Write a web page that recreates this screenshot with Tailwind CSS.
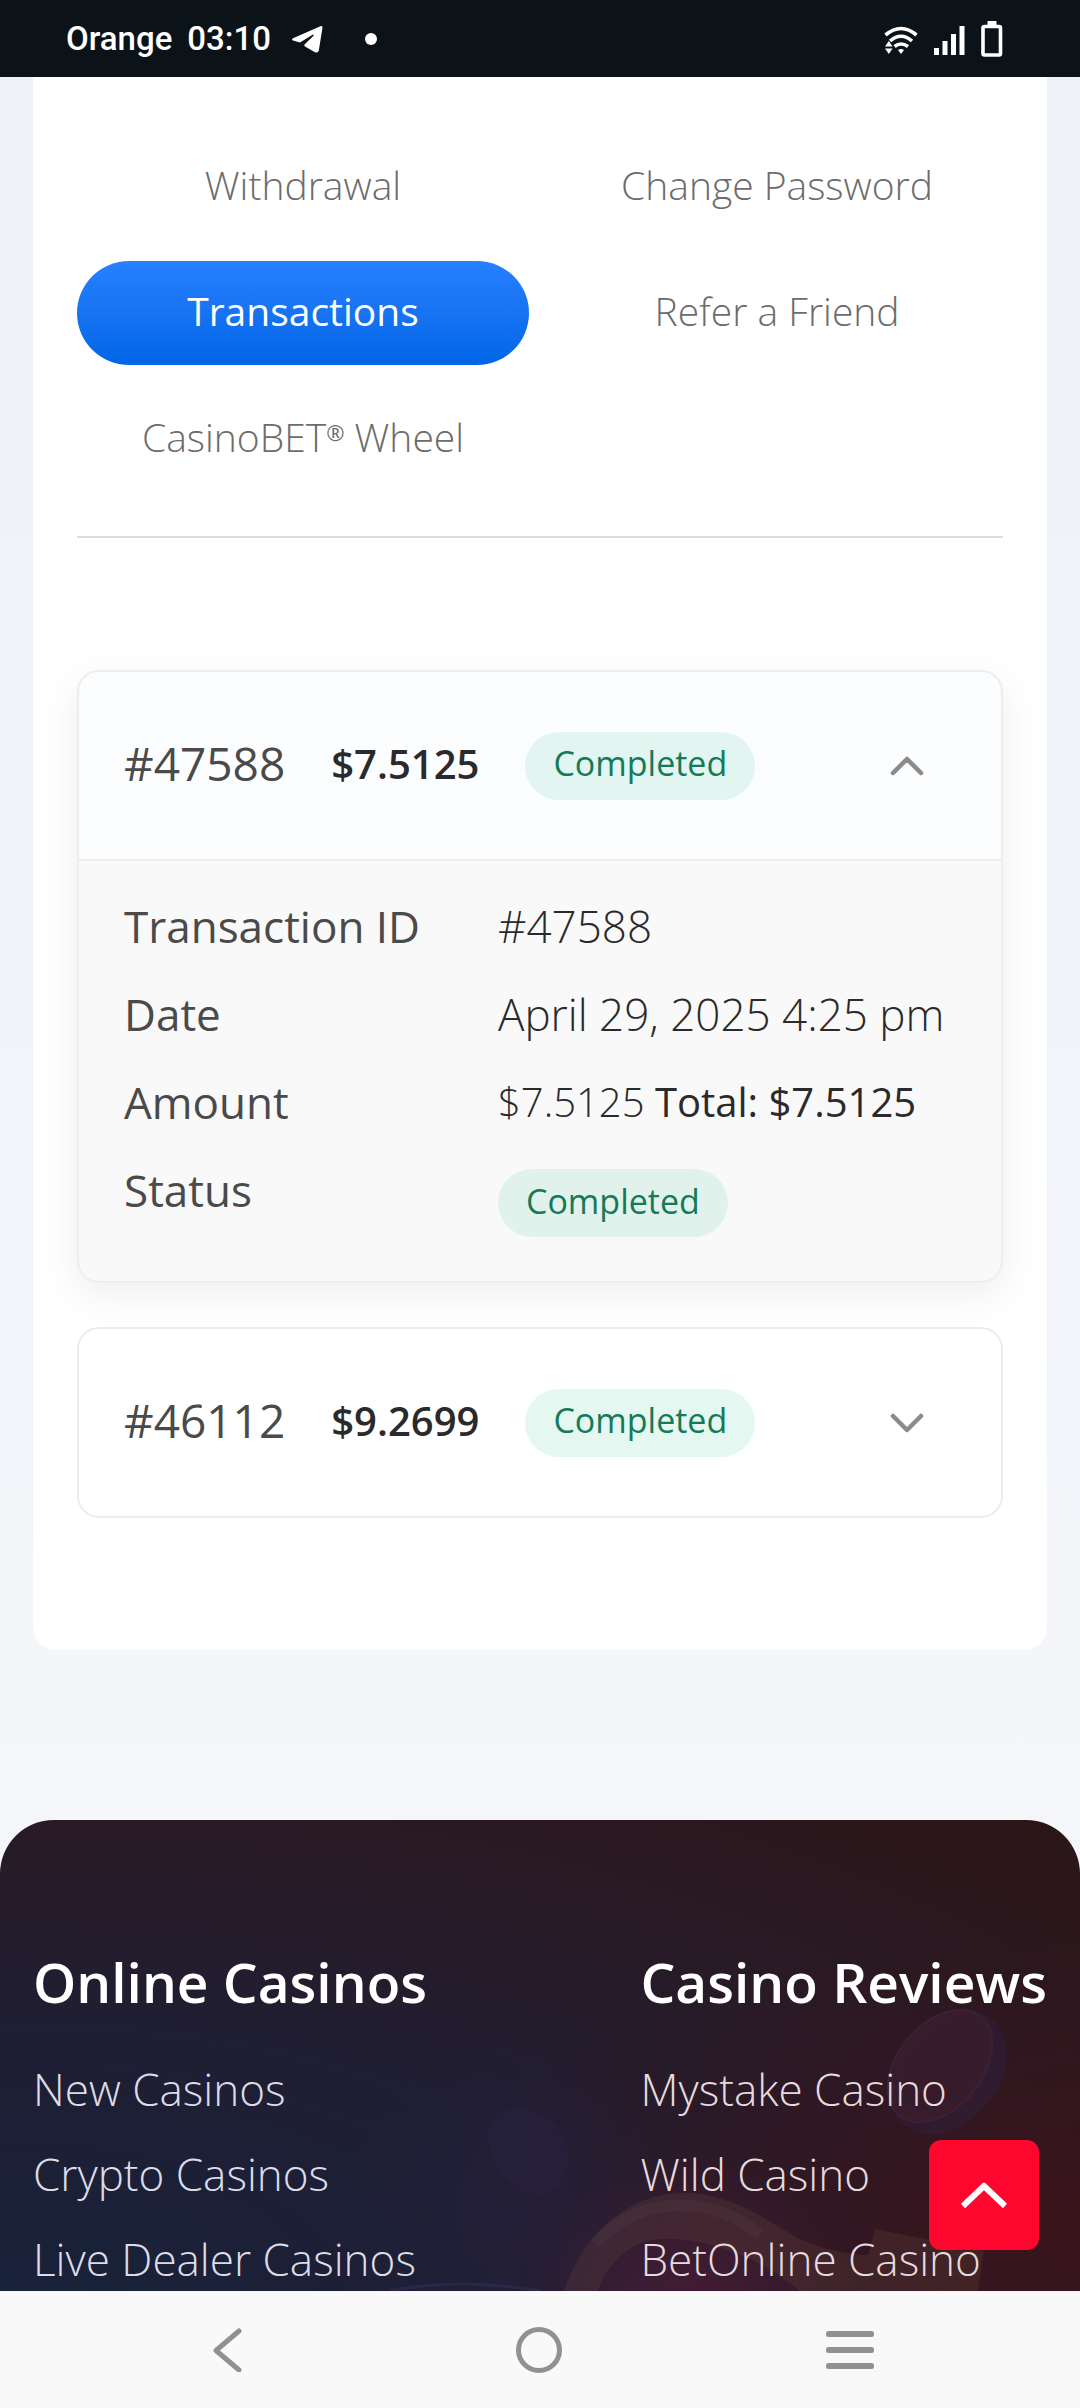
<!DOCTYPE html>
<html lang="en">
<head>
  <meta charset="UTF-8" />
  <meta name="viewport" content="width=device-width, initial-scale=1.0"/>
  <title>Transactions - CasinoBET</title>
  <script src="https://cdn.jsdelivr.net/npm/@tailwindcss/browser@4"></script>
</head>
<body class="min-h-screen flex flex-col bg-[#f1f4f9] font-['Open_Sans',sans-serif] text-[#2a2a2c]">

  <!-- Status bar -->
  <header class="flex items-center h-[77px] px-[66px] bg-[#0c1318] text-white">
    <div class="flex items-center gap-[15px] font-['Roboto',sans-serif] font-medium text-[33px] leading-10">
      <span>Orange</span>
      <span>03:10</span>
    </div>
    <svg class="ml-5 w-8 h-7" viewBox="0 0 32 28" fill="currentColor">
      <path d="M30 1 2 13.200Q0 14.500 2 15.500L9 17.500 22 9.500Q23.500 9.500 22.500 10.800L13.500 19.500Q13 20.500 14 21.500L24 27.200Q27 28.500 27.800 25.500L31.500 2.500Q31.500 .5 30 1Z"/>
    </svg>
    <span class="ml-[42px] size-3 rounded-full bg-white"></span>
    <div class="ml-auto flex items-center gap-4 pr-[11px]">
      <svg class="w-[34px] h-9" viewBox="0 0 34 36">
        <g fill="none" stroke="#fff" stroke-width="3.600">
          <path d="M1.500 14Q17 1 32.500 14"/>
          <path d="M6 20Q17 10.500 28 20"/>
          <path d="M10.500 25.500Q17 20.500 24 25.500"/>
        </g>
        <path fill="#fff" d="M1 25.500 4.800 20 8.600 25.500ZM1 27.500H8.600L4.800 33ZM14 29Q17 27 20 29L17 33Z"/>
      </svg>
      <svg class="w-[31px] h-9" viewBox="0 0 31 36" fill="#fff">
        <path d="M0 27h5v7H0zM8.500 20h5v14h-5zM17 13h5v21h-5zM25.500 5h5v29h-5z"/>
      </svg>
      <svg class="w-[22px] h-9" viewBox="0 0 22 36">
        <path fill="#fff" d="M6.500 0h9v5h-9z"/>
        <rect x="2" y="5.500" width="17.500" height="28.500" rx="1.500" fill="none" stroke="#fff" stroke-width="3.600"/>
      </svg>
    </div>
  </header>

  <main class="px-[33px] pb-[170px] bg-linear-to-b from-[#eef2f8] to-[#f4f6fa]">
    <div class="px-11 pt-[58px] pb-[132px] bg-white rounded-b-[22px]">

      <!-- Account menu -->
      <nav class="grid grid-cols-2 gap-x-[22px] gap-y-[22px] pb-[45px] border-b-2 border-[#dcdcdd] font-light text-[39px] text-[#6c6c6c] text-center">
        <a href="#" class="flex items-center justify-center h-[104px] pb-1 rounded-full">Withdrawal</a>
        <a href="#" class="flex items-center justify-center h-[104px] pb-1 rounded-full">Change Password</a>
        <a href="#" class="flex items-center justify-center h-[104px] pb-1 rounded-full bg-linear-to-b from-[#2680ff] to-[#0066e6] font-medium text-white">Transactions</a>
        <a href="#" class="flex items-center justify-center h-[104px] pb-1 rounded-full">Refer a Friend</a>
        <a href="#" class="flex items-center justify-center h-[104px] pb-1 rounded-full"><span>CasinoBET<sup class="text-[22px] font-normal">®</sup> Wheel</span></a>
      </nav>

      <!-- Transactions -->
      <section class="mt-[132px] flex flex-col gap-11">
        <article class="border-2 border-[#ededee] rounded-[22px] overflow-hidden bg-[#f9f9f9] shadow-[0_11px_40px_rgba(0,0,0,0.07)]">
          <button type="button" aria-expanded="true" class="flex items-center w-full h-[189px] pl-[45px] pr-[77px] gap-[46px] border-b-2 border-[#ededee] bg-[#fcfdff] text-left">
            <span class="pb-1 text-[46px] text-[#4a4a4a]">#47588</span>
            <span class="pb-1 text-[40px] font-semibold">$7.5125</span>
            <span class="h-[68px] px-7 pb-1 flex items-center rounded-full bg-[#e2f5f0] font-medium text-[34px] text-[#147a58]">Completed</span>
            <svg class="ml-auto w-[34px] h-5" viewBox="0 0 34 20" fill="none" stroke="#8b8b8c" stroke-width="4.500" stroke-linecap="round" stroke-linejoin="round"><path d="M3 17 17 3 31 17"/></svg>
          </button>
          <dl class="grid grid-cols-[374px_1fr] gap-y-[22px] pl-[45px] pt-8 pb-11 text-[44px] leading-[66px] whitespace-nowrap">
            <dt class="font-medium text-[#4a4a4a]">Transaction ID</dt>
            <dd class="font-light">#47588</dd>
            <dt class="font-medium text-[#4a4a4a]">Date</dt>
            <dd class="font-light">April 29, 2025 4:25 pm</dd>
            <dt class="font-medium text-[#4a4a4a]">Amount</dt>
            <dd class="font-light text-[40px]">$7.5125 <strong class="font-medium">Total: $7.5125</strong></dd>
            <dt class="font-medium text-[#4a4a4a]">Status</dt>
            <dd class="flex pt-3"><span class="h-[68px] px-7 pb-1 flex items-center rounded-full bg-[#e1f2ec] font-medium text-[34px] text-[#147a58]">Completed</span></dd>
          </dl>
        </article>

        <article class="border-2 border-[#ededee] rounded-[22px] overflow-hidden bg-white">
          <button type="button" aria-expanded="false" class="flex items-center w-full h-[187px] pl-[45px] pr-[77px] gap-[46px] text-left">
            <span class="pb-1 text-[46px] text-[#4a4a4a]">#46112</span>
            <span class="pb-1 text-[40px] font-semibold">$9.2699</span>
            <span class="h-[68px] px-7 pb-1 flex items-center rounded-full bg-[#e5f7f1] font-medium text-[34px] text-[#147a58]">Completed</span>
            <svg class="ml-auto w-[34px] h-5" viewBox="0 0 34 20" fill="none" stroke="#8b8b8c" stroke-width="4.500" stroke-linecap="round" stroke-linejoin="round"><path d="M3 3 17 17 31 3"/></svg>
          </button>
        </article>
      </section>
    </div>
  </main>

  <div class="flex-1 bg-[#f4f6fa]">
    <footer class="relative h-full overflow-hidden rounded-t-[54px] px-[33px] pt-[130px] pb-[7px] bg-[radial-gradient(ellipse_at_0%_100%,#18223a_0%,#1f1e33_40%,#291a25_70%,#2b1516_100%)]">
      <!-- Artwork -->
      <svg class="absolute inset-0 w-full h-full" viewBox="0 0 1080 472" preserveAspectRatio="xMidYMax slice">
        <defs>
          <radialGradient id="glow" cx="1" cy=".85" r=".6">
            <stop offset="0" stop-color="#3e1218" stop-opacity=".8"/>
            <stop offset="1" stop-color="#3e1218" stop-opacity="0"/>
          </radialGradient>
          <radialGradient id="haze" cx="690" cy="500" r="170" gradientUnits="userSpaceOnUse">
            <stop offset="0" stop-color="#521e3c" stop-opacity=".7"/>
            <stop offset="1" stop-color="#521e3c" stop-opacity="0"/>
          </radialGradient>
          <radialGradient id="violet" cx="515" cy="390" r="170" gradientUnits="userSpaceOnUse">
            <stop offset="0" stop-color="#27213f" stop-opacity=".5"/>
            <stop offset="1" stop-color="#27213f" stop-opacity="0"/>
          </radialGradient>
        </defs>
        <rect width="1080" height="472" fill="url(#glow)"/>
        <rect width="1080" height="472" fill="url(#violet)"/>
        <rect width="1080" height="472" fill="url(#haze)"/>
        <path d="M492 300C505 285 530 287 548 300 566 313 573 335 566 355 558 375 540 382 520 370 496 355 480 320 492 300Z" fill="#2b2444" opacity=".4"/>
        <path d="M902 227C920 202 950 187 975 192 1000 198 1012 222 1005 252 996 285 960 317 932 316 905 313 888 295 887 272 886 255 892 240 902 227Z" fill="#301d33" opacity=".8"/>
        <ellipse cx="940" cy="247" rx="64" ry="42" transform="rotate(-50 940 247)" fill="#381c2b" stroke="#3c2135" stroke-width="2"/>
        <ellipse cx="943" cy="247" rx="52" ry="31" transform="rotate(-50 943 247)" fill="#371b2a" stroke="#321d31" stroke-width="3"/>
        <path d="M564 472C585 410 635 371 690 374 735 377 765 400 800 420 825 432 850 435 868 436L875 410 984 432 978 472H800C780 455 755 440 725 430 690 418 650 415 630 430 612 442 602 458 598 472Z" fill="#64463a" opacity=".28"/>
        <path d="M595 425C640 375 710 375 760 415" fill="none" stroke="#54404c" stroke-width="12" opacity=".25"/>
        <path d="M390 472Q460 458 540 472" fill="none" stroke="#33305c" stroke-width="3" opacity=".5"/>
      </svg>

      <div class="relative flex justify-between whitespace-nowrap">
        <div>
          <h3 class="text-[55px] leading-[64px] font-semibold text-white">Online Casinos</h3>
          <ul class="mt-[50px] flex flex-col gap-[35px] text-[44px] leading-[50px] font-light text-[#dddce6]">
            <li><a href="#">New Casinos</a></li>
            <li><a href="#">Crypto Casinos</a></li>
            <li><a href="#">Live Dealer Casinos</a></li>
          </ul>
        </div>
        <div>
          <h3 class="text-[55px] leading-[64px] font-semibold text-white">Casino Reviews</h3>
          <ul class="mt-[50px] flex flex-col gap-[35px] text-[44px] leading-[50px] font-light text-[#e6dadf]">
            <li><a href="#">Mystake Casino</a></li>
            <li><a href="#">Wild Casino</a></li>
            <li><a href="#">BetOnline Casino</a></li>
          </ul>
        </div>
      </div>

      <!-- Back to top -->
      <button type="button" aria-label="Back to top" class="absolute right-[41px] bottom-[41px] size-[110px] flex items-center justify-center rounded-xl bg-[#ff062f]">
        <svg class="w-12 h-7" viewBox="0 0 48 28" fill="none" stroke="#fff" stroke-width="6" stroke-linejoin="round"><path d="M3 25 24 5 45 25"/></svg>
      </button>
    </footer>
  </div>

  <!-- System navigation -->
  <nav class="flex items-center justify-between h-[116px] px-[206px] bg-[#f9f9f9] text-[#919191]">
    <button type="button" aria-label="Back">
      <svg class="size-11" viewBox="0 0 44 44" fill="none" stroke="currentColor" stroke-width="5" stroke-linecap="round" stroke-linejoin="round"><path d="M33 3 10 22.500 33 42"/></svg>
    </button>
    <button type="button" aria-label="Home">
      <svg class="size-12" viewBox="0 0 48 48" fill="none" stroke="currentColor" stroke-width="5"><circle cx="25" cy="24" r="20.500"/></svg>
    </button>
    <button type="button" aria-label="Recent apps">
      <svg class="w-12 h-11" viewBox="0 0 48 44" fill="currentColor"><rect y="3" width="48" height="6" rx="2.500"/><rect y="19" width="48" height="6" rx="2.500"/><rect y="35" width="48" height="6" rx="2.500"/></svg>
    </button>
  </nav>
</body>
</html>
